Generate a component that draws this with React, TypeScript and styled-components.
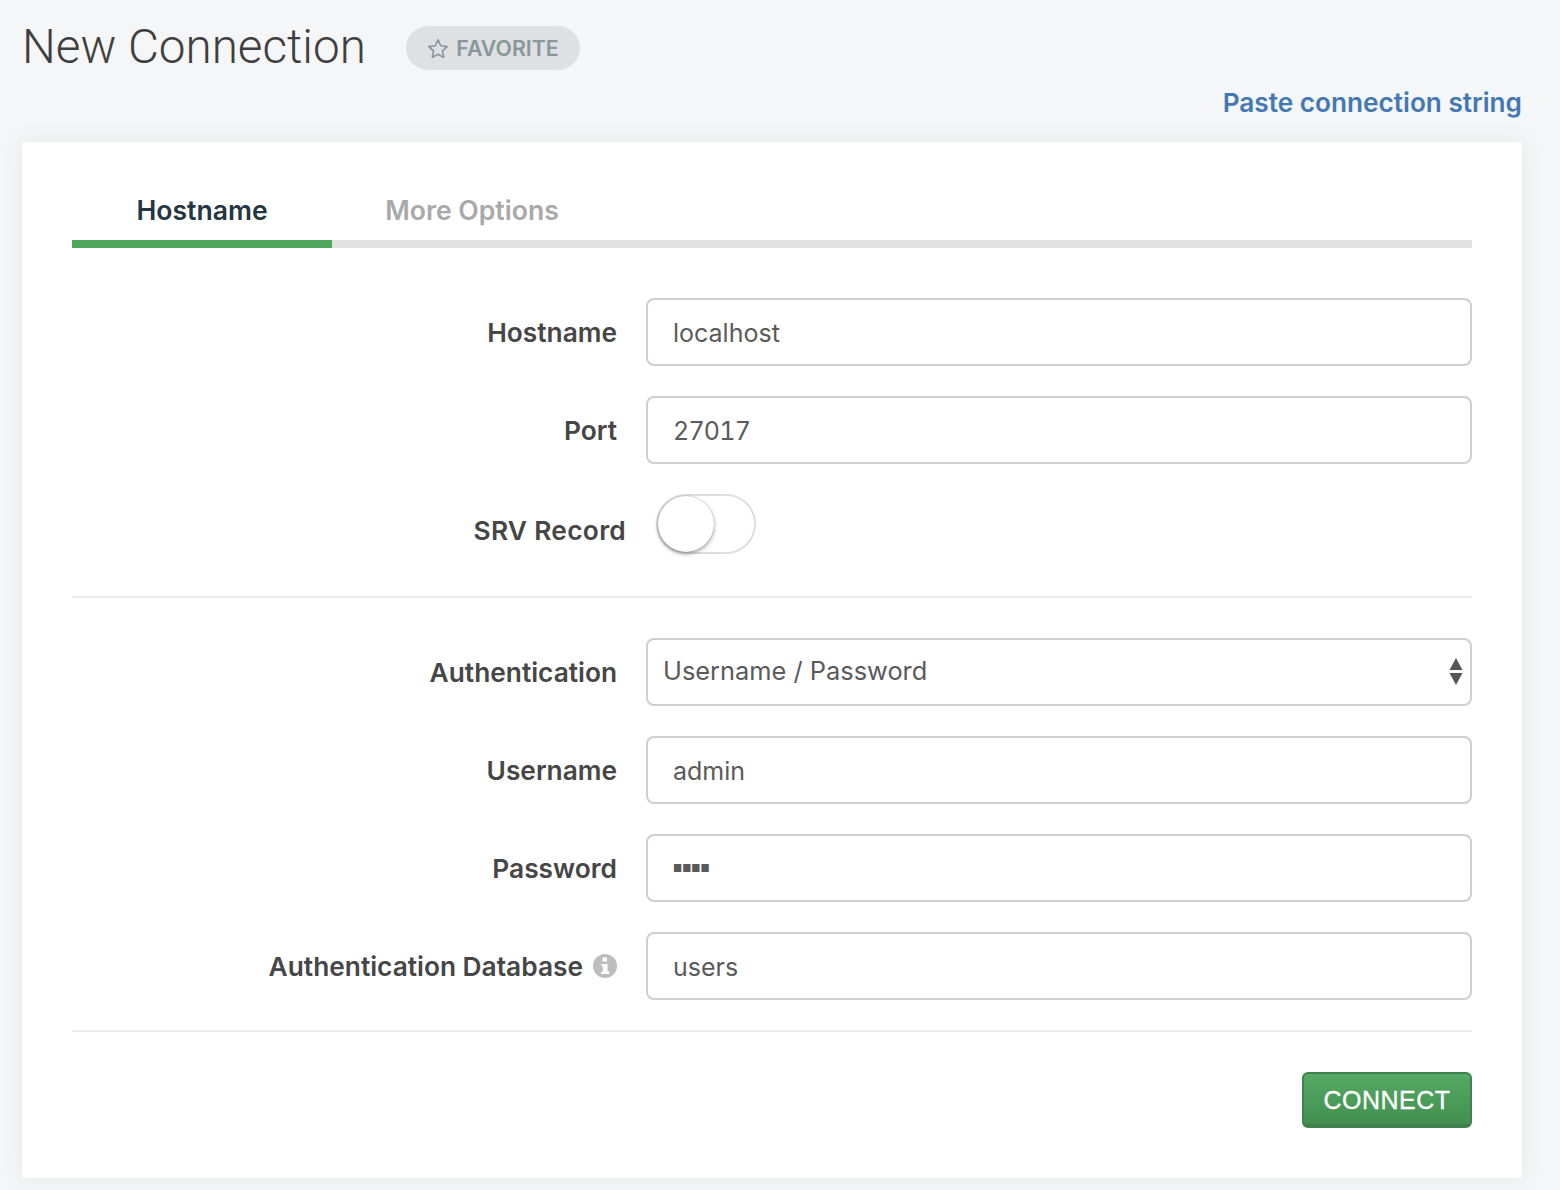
import * as React from 'react'
import styled, { createGlobalStyle } from 'styled-components'

const GlobalStyle = createGlobalStyle`
  html, body {
    margin: 0;
    background: #f5f6f7;
    font-family: 'Inter', 'Liberation Sans', sans-serif;
    color: #464646;
  }
  * {
    box-sizing: border-box;
  }
`

const Page = styled.div`
  width: 1560px;
  height: 1190px;
  padding: 0 38px 0 22px;
  overflow: hidden;
`

const Header = styled.header`
  height: 92px;
  display: flex;
  align-items: center;
`

const Title = styled.h1`
  margin: 2px 40px 0 0;
  width: 344px;
  font-size: 47.6px;
  line-height: 92px;
  font-weight: 300;
  font-family: 'Roboto', 'Liberation Sans', sans-serif;
  color: #3f3f3f;
  white-space: nowrap;
`

const FavoriteButton = styled.button`
  width: 174px;
  height: 44px;
  margin-top: 4px;
  border: 0;
  border-radius: 22px;
  background: #dee0e3;
  color: #88989a;
  font-family: inherit;
  font-size: 21.3px;
  font-weight: 600;
  display: flex;
  align-items: center;
  justify-content: center;
  gap: 7px;
  padding: 0;
`

const PasteRow = styled.div`
  height: 50px;
  margin-top: -7px;
  display: flex;
  justify-content: flex-end;
  align-items: flex-start;
`

const PasteLink = styled.a`
  font-size: 26.2px;
  line-height: 36px;
  font-weight: 600;
  color: #4378b4;
  text-decoration: none;
`

const Card = styled.main`
  height: 1036px;
  margin-top: 7px;
  padding: 50px;
  background: #fff;
  box-shadow: 0 0 24px rgba(60, 70, 90, 0.08);
`

const Tabs = styled.nav`
  display: flex;
  height: 56px;
  border-bottom: 8px solid #e2e2e2;
`

const Tab = styled.div<{ $active?: boolean; $width: number }>`
  width: ${({ $width }) => $width}px;
  height: 56px;
  text-align: center;
  font-size: 26.6px;
  line-height: 36px;
  font-weight: 600;
  color: ${({ $active }) => ($active ? '#243642' : '#a9a9a9')};
  border-bottom: 8px solid ${({ $active }) => ($active ? '#4fa75c' : 'transparent')};
`

const Form = styled.form`
  padding-top: 50px;
`

const Row = styled.div`
  display: flex;
  align-items: center;
  margin-bottom: 30px;
`

const Label = styled.label`
  width: 574px;
  flex-shrink: 0;
  padding-right: 29px;
  display: flex;
  justify-content: flex-end;
  align-items: center;
  gap: 10px;
  font-size: 26.3px;
  font-weight: 600;
  color: #464646;
  white-space: nowrap;
`

const Input = styled.input<{ $secret?: boolean; $numeric?: boolean }>`
  flex: 1;
  height: 68px;
  padding: ${({ $secret }) => ($secret ? '0 25px' : '2px 25px 0')};
  border: 2px solid #cfcfcf;
  border-radius: 8px;
  background: #fff;
  outline: 0;
  font-family: inherit;
  font-size: ${({ $secret }) => ($secret ? '10px' : '25px')};
  font-variant-numeric: ${({ $numeric }) => ($numeric ? 'tabular-nums' : 'normal')};
  letter-spacing: ${({ $numeric }) => ($numeric ? '-0.8px' : 'normal')};
  color: #5a5a5a;
  -webkit-text-security: ${({ $secret }) => ($secret ? 'square' : 'none')};
`

const SelectWrap = styled.div`
  flex: 1;
  position: relative;
`

const Select = styled.select`
  width: 100%;
  height: 68px;
  padding: 0 40px 4px 15px;
  appearance: none;
  border: 2px solid #cfcfcf;
  border-radius: 8px;
  background: #fff;
  outline: 0;
  font-family: inherit;
  font-size: 25.4px;
  color: #5a5a5a;
`

const SelectArrows = styled.svg`
  position: absolute;
  right: 9px;
  top: 20px;
  width: 14px;
  height: 27px;
`

const SwitchTrack = styled.button`
  position: relative;
  width: 100px;
  height: 60px;
  margin-left: 10px;
  padding: 0;
  border: 2px solid #dedede;
  border-radius: 30px;
  background: #fff;
`

const SwitchKnob = styled.span`
  position: absolute;
  left: 0;
  top: 0;
  width: 56px;
  height: 56px;
  border-radius: 50%;
  background: #fff;
  box-shadow: 0 2px 4px rgba(0, 0, 0, 0.35), 0 0 1px rgba(0, 0, 0, 0.4);
`

const Divider = styled.hr`
  height: 2px;
  margin: 0;
  border: 0;
  background: #ededed;
`

const SwitchRow = styled(Row)`
  margin-bottom: 42px;
`

const AuthBlock = styled.div`
  margin-top: 40px;
`

const Actions = styled.div`
  margin-top: 40px;
  display: flex;
  justify-content: flex-end;
`

const ConnectButton = styled.button`
  width: 170px;
  height: 56px;
  padding: 3px 0 0;
  border: 2px solid #41824c;
  border-bottom-width: 4px;
  border-radius: 6px;
  background: linear-gradient(#54a963, #438f50);
  color: #fff;
  font-family: 'Liberation Sans', sans-serif;
  font-size: 25px;
  letter-spacing: 0.5px;
  -webkit-text-stroke: 0.3px #fff;
`

const SrvText = styled.span`
  margin: 12px -9px 0 0;
  letter-spacing: 0.3px;
`

export default function App() {
  return (
    <Page>
      <GlobalStyle />
      <Header>
        <Title>New Connection</Title>
        <FavoriteButton type='button'>
          <svg width='22' height='21' viewBox='0 0 24 23' fill='none' stroke='#88989a' strokeWidth='1.8' strokeLinejoin='round'>
            <path d='M12 2l3 6.5 7 .9-5.1 4.8 1.3 7L12 17.8l-6.2 3.4 1.3-7L2 9.4l7-.9z' />
          </svg>
          FAVORITE
        </FavoriteButton>
      </Header>
      <PasteRow>
        <PasteLink href='#paste'>Paste connection string</PasteLink>
      </PasteRow>
      <Card>
        <Tabs>
          <Tab $active $width={260}>Hostname</Tab>
          <Tab $width={280}>More Options</Tab>
        </Tabs>
        <Form>
          <Row>
            <Label>Hostname</Label>
            <Input readOnly value='localhost' />
          </Row>
          <Row>
            <Label>Port</Label>
            <Input readOnly $numeric value='27017' />
          </Row>
          <SwitchRow>
            <Label><SrvText>SRV Record</SrvText></Label>
            <SwitchTrack type='button' aria-label='SRV Record'>
              <SwitchKnob />
            </SwitchTrack>
          </SwitchRow>
          <Divider />
          <AuthBlock>
            <Row>
              <Label>Authentication</Label>
              <SelectWrap>
                <Select defaultValue='password'>
                  <option value='password'>Username / Password</option>
                </Select>
                <SelectArrows viewBox='0 0 14 27'>
                  <path d='M7 0l6.5 12H.5z M.5 15h13L7 27z' fill='#555' />
                </SelectArrows>
              </SelectWrap>
            </Row>
            <Row>
              <Label>Username</Label>
              <Input readOnly value='admin' />
            </Row>
            <Row>
              <Label>Password</Label>
              <Input readOnly $secret value='pass' />
            </Row>
            <Row>
              <Label>
                Authentication Database
                <svg width='24' height='24' viewBox='0 0 24 24'>
                  <circle cx='12' cy='12' r='12' fill='#bdbdbd' />
                  <path d='M9.5 3.5h4.5v4H9.5z M8.5 10h6v7.5h1.8V20H8.2v-2.5H10V12.5H8.5z' fill='#fff' />
                </svg>
              </Label>
              <Input readOnly value='users' />
            </Row>
          </AuthBlock>
          <Divider />
          <Actions>
            <ConnectButton type='button'>CONNECT</ConnectButton>
          </Actions>
        </Form>
      </Card>
    </Page>
  )
}
